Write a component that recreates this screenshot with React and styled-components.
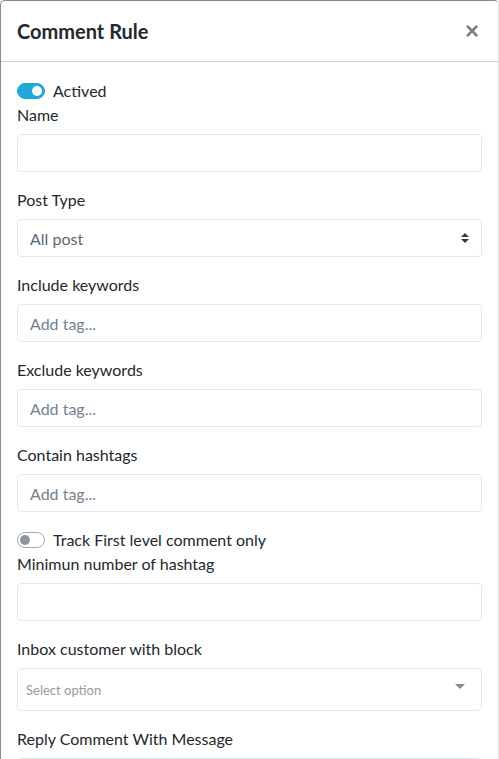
import React, { useState } from "react";
import styled, { createGlobalStyle } from "styled-components";

const GlobalStyle = createGlobalStyle`
  html, body {
    margin: 0;
    padding: 0;
    background: #fff;
    font-family: "Lato", "Noto Sans", sans-serif;
    color: #212529;
  }
  * { box-sizing: border-box; }
`;

const Modal = styled.div`
  width: 499px;
  min-height: 780px;
  background: #fff;
  border: 1px solid #8a8a8a;
  border-right-color: #e0e0e0;
  border-bottom: none;
  border-radius: 5px 5px 0 0;
`;

const Header = styled.div`
  display: flex;
  align-items: center;
  justify-content: space-between;
  padding: 15px 16px 15px;
  border-bottom: 1px solid #c8ced3;
`;

const Title = styled.h5`
  margin: 0;
  font-size: 20px;
  line-height: 30px;
  font-weight: 700;
  color: #23282c;
`;

const Close = styled.button`
  border: none;
  background: none;
  padding: 0 3px;
  font-size: 24px;
  line-height: 1;
  font-weight: 700;
  color: #000;
  opacity: 0.5;
  cursor: pointer;
  font-family: "Liberation Sans", sans-serif;
`;

const Body = styled.div`
  padding: 17px 16px 16px;
`;

const Group = styled.div`
  margin-bottom: 16px;
`;

const Label = styled.label`
  display: block;
  font-size: 16px;
  line-height: 24px;
  margin-bottom: 7px;
  color: #23282c;
`;

const SwitchRow = styled.label`
  display: flex;
  align-items: center;
  gap: 8px;
  min-height: 24px;
  font-size: 16px;
  line-height: 24px;
  color: #23282c;
  cursor: pointer;
`;

const Track = styled.span`
  position: relative;
  width: 28px;
  height: 16px;
  border-radius: 8px;
  border: 1px solid ${(p) => (p.$on ? "#20a8d8" : "#a3a9b0")};
  background: ${(p) => (p.$on ? "#20a8d8" : "#fff")};
  flex-shrink: 0;

  &::after {
    content: "";
    position: absolute;
    top: 2px;
    left: ${(p) => (p.$on ? "14px" : "2px")};
    width: 10px;
    height: 10px;
    border-radius: 50%;
    background: ${(p) => (p.$on ? "#fff" : "#8f969e")};
  }
`;

const Input = styled.input`
  display: block;
  width: 100%;
  height: 38px;
  padding: 6px 12px;
  font-size: 16px;
  font-family: inherit;
  color: #5c6873;
  border: 1px solid #e4e7ea;
  border-radius: 4px;
  outline: none;
  &::placeholder { color: #73818f; }
`;

const Select = styled.div`
  display: flex;
  align-items: center;
  justify-content: space-between;
  height: 38px;
  padding: 6px 12px;
  font-size: 16px;
  color: #5c6873;
  border: 1px solid #e4e7ea;
  border-radius: 4px;
`;

const Picker = styled.div`
  display: flex;
  align-items: center;
  justify-content: space-between;
  height: 43px;
  padding: 0 16px 0 8px;
  font-size: 13px;
  color: #999;
  border: 1px solid #e4e7ea;
  border-radius: 5px;
`;

const Caret = styled.span`
  width: 0;
  height: 0;
  margin-bottom: 6px;
  border-left: 5px solid transparent;
  border-right: 5px solid transparent;
  border-top: 5px solid #888;
`;

const UpDown = () => (
  <svg width="8" height="10" viewBox="0 0 4 5">
    <path fill="#343a40" d="M2 0L0 2h4zm0 5L0 3h4z" />
  </svg>
);

function Toggle({ label, initial }) {
  const [on, setOn] = useState(initial);
  return (
    <SwitchRow onClick={() => setOn(!on)}>
      <Track $on={on} />
      {label}
    </SwitchRow>
  );
}

export default function App() {
  return (
    <>
      <GlobalStyle />
      <Modal>
        <Header>
          <Title>Comment Rule</Title>
          <Close>×</Close>
        </Header>
        <Body>
          <Toggle label="Actived" initial={true} />
          <Group>
            <Label>Name</Label>
            <Input />
          </Group>
          <Group>
            <Label>Post Type</Label>
            <Select>
              <span>All post</span>
              <UpDown />
            </Select>
          </Group>
          <Group>
            <Label>Include keywords</Label>
            <Input placeholder="Add tag..." />
          </Group>
          <Group>
            <Label>Exclude keywords</Label>
            <Input placeholder="Add tag..." />
          </Group>
          <Group>
            <Label>Contain hashtags</Label>
            <Input placeholder="Add tag..." />
          </Group>
          <Toggle label="Track First level comment only" initial={false} />
          <Group>
            <Label>Minimun number of hashtag</Label>
            <Input />
          </Group>
          <Group>
            <Label>Inbox customer with block</Label>
            <Picker>
              <span>Select option</span>
              <Caret />
            </Picker>
          </Group>
          <Group>
            <Label>Reply Comment With Message</Label>
            <Input />
          </Group>
        </Body>
      </Modal>
    </>
  );
}
